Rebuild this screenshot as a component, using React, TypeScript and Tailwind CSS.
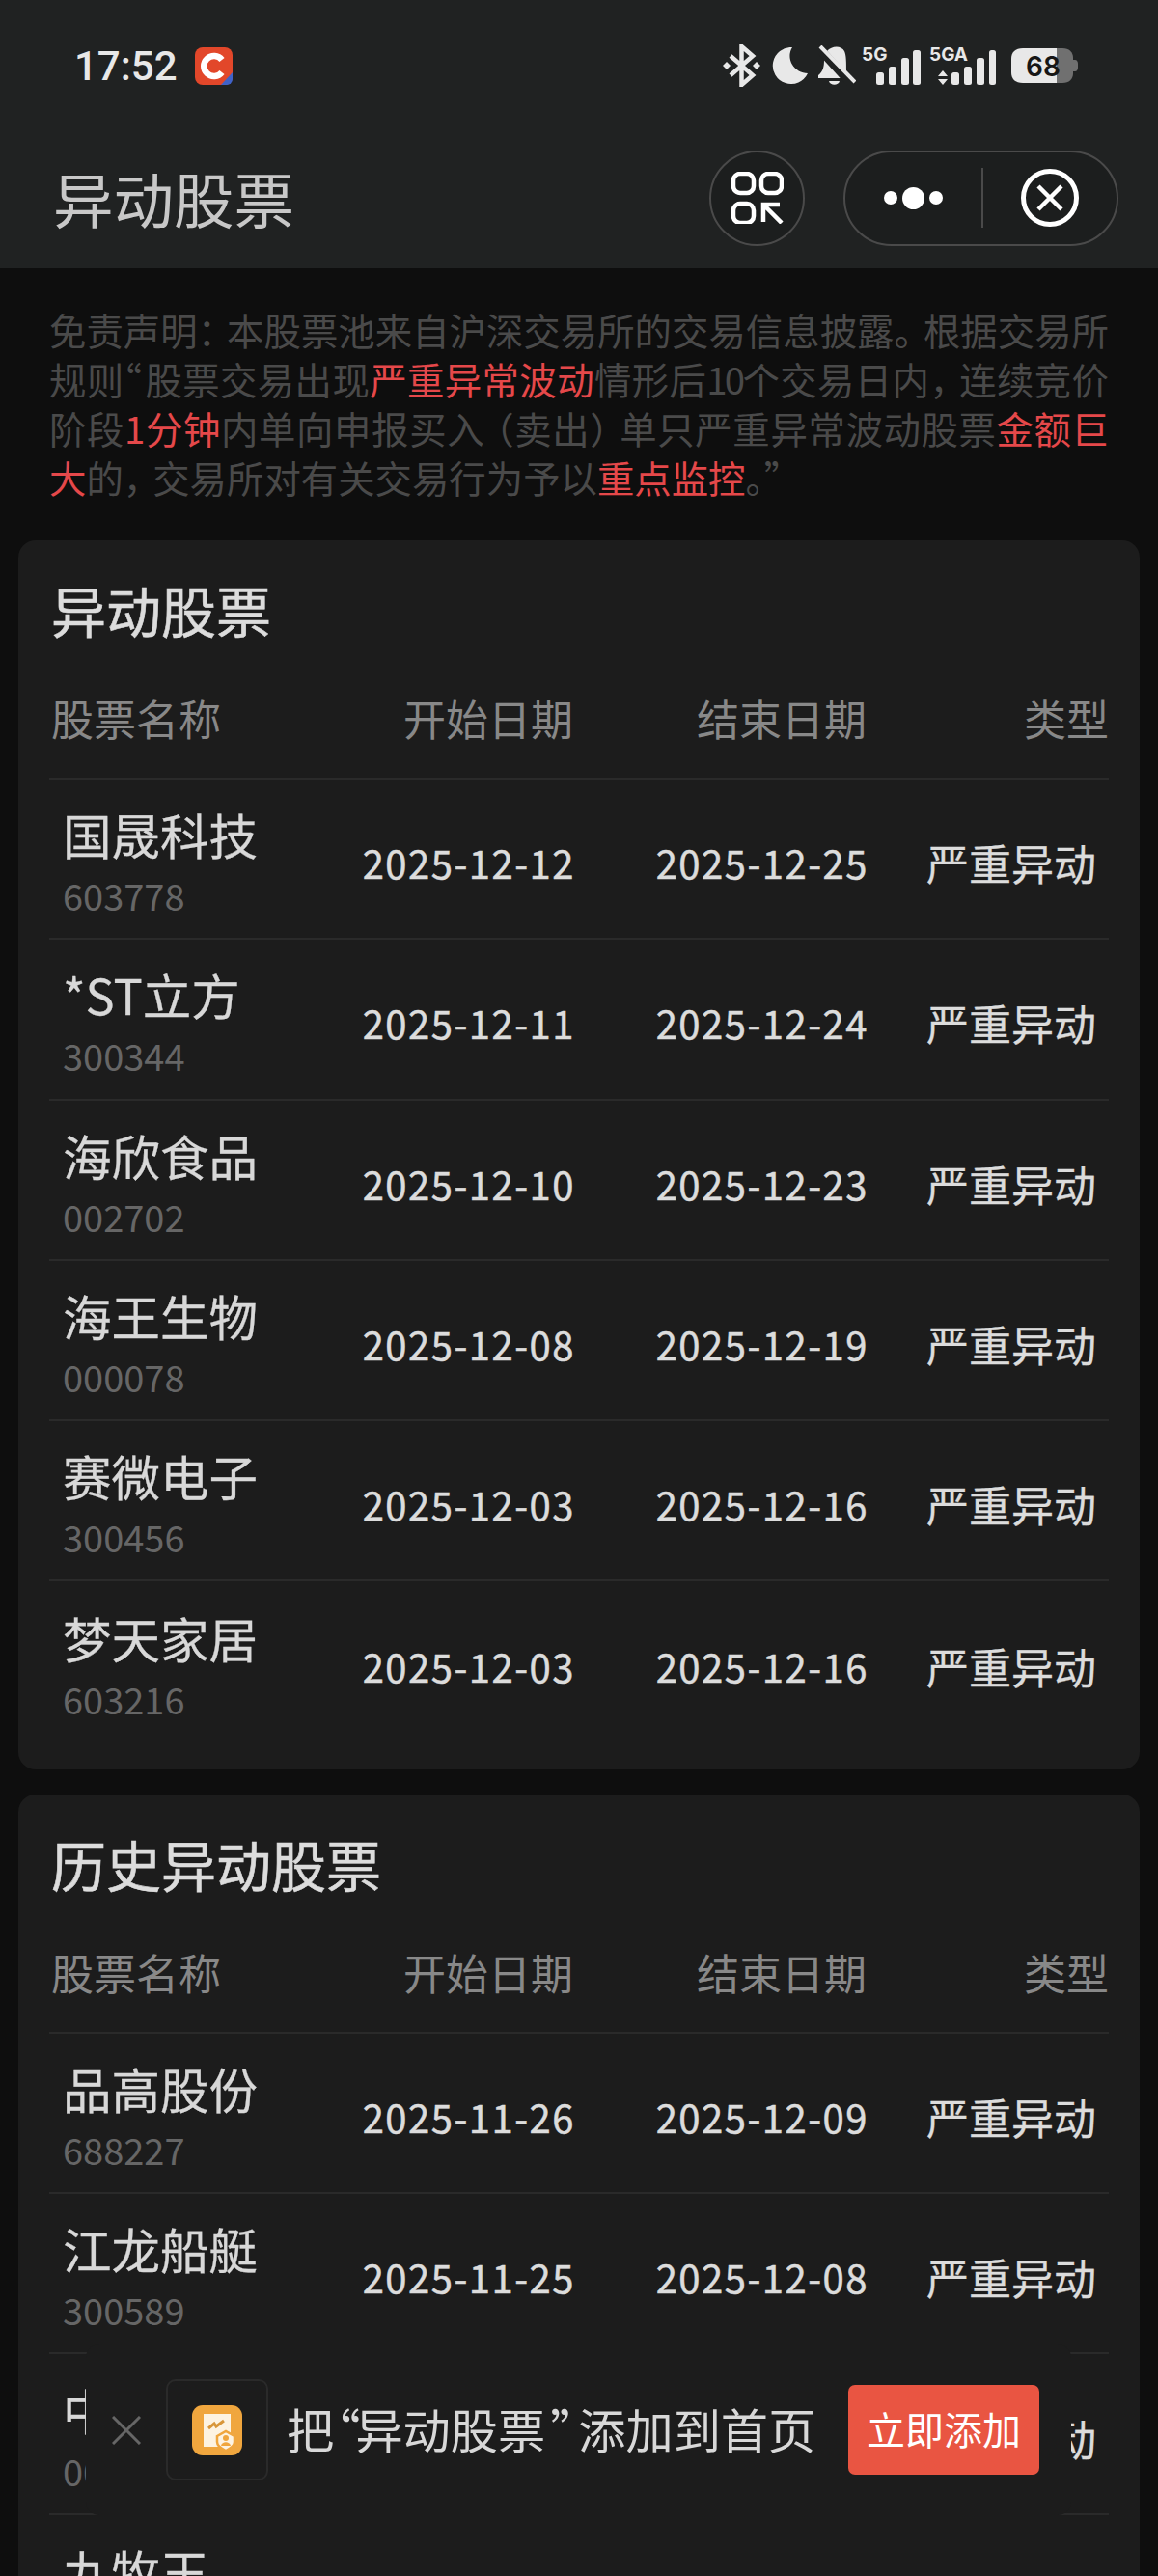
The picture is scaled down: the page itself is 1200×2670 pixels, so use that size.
type Stock = { name: string; code: string; start: string; end: string };

const CURRENT: Stock[] = [
  { name: "国晟科技", code: "603778", start: "2025-12-12", end: "2025-12-25" },
  { name: "*ST立方", code: "300344", start: "2025-12-11", end: "2025-12-24" },
  { name: "海欣食品", code: "002702", start: "2025-12-10", end: "2025-12-23" },
  { name: "海王生物", code: "000078", start: "2025-12-08", end: "2025-12-19" },
  { name: "赛微电子", code: "300456", start: "2025-12-03", end: "2025-12-16" },
  { name: "梦天家居", code: "603216", start: "2025-12-03", end: "2025-12-16" },
];

const HISTORY: Stock[] = [
  { name: "品高股份", code: "688227", start: "2025-11-26", end: "2025-12-09" },
  { name: "江龙船艇", code: "300589", start: "2025-11-25", end: "2025-12-08" },
  { name: "中国长城", code: "000066", start: "2025-11-21", end: "2025-12-04" },
  { name: "九牧王", code: "601566", start: "2025-11-20", end: "2025-12-03" },
];

const COLS = "grid grid-cols-[324px_221px_304px_249px]";

function StatusIcons() {
  return (
    <div className="flex items-center pr-[83px]">
      <svg width="39" height="44" viewBox="0 0 39 44" fill="none" stroke="#e8e8e8" strokeWidth="4.5">
        <path d="M8 12 L31 32 L19.5 42 V2 L31 12 L8 32" />
        <path d="M4 18 L8 22 L4 26 L0 22Z M35 18 L39 22 L35 26 L31 22Z" fill="#e8e8e8" stroke="none" />
      </svg>
      <svg className="ml-[11px]" width="38" height="38" viewBox="0 0 38 38" fill="#e8e8e8">
        <path d="M22 0 A19 19 0 1 0 38 27 A19 18 0 0 1 22 0Z" />
      </svg>
      <svg className="ml-[11px]" width="39" height="42" viewBox="0 0 39 42">
        <path d="M9 6 C14 0 24 0 27 6 C29 10 29 18 29 27 L31 31 L31 34 L0 34 L0 31 C5 27 6 22 6 15 C6 11 7 8 9 6Z" fill="#e8e8e8" />
        <path d="M11 37 H22 C21 42 12 42 11 37Z" fill="#e8e8e8" />
        <path d="M-2 0 L36 42" stroke="#202222" strokeWidth="9" />
        <path d="M2 1 L38 38" stroke="#e8e8e8" strokeWidth="4" />
      </svg>
      <svg className="ml-[6px]" width="61" height="41" viewBox="0 0 61 41" fill="#e8e8e8">
        <text x="0" y="15" fontFamily="Inter" fontWeight="700" fontSize="19">5G</text>
        <rect x="15" y="27" width="8" height="13" rx="2.5" />
        <rect x="28" y="21" width="8" height="19" rx="2.5" />
        <rect x="41" y="12" width="8" height="28" rx="2.5" />
        <rect x="53" y="4" width="8" height="36" rx="2.5" />
      </svg>
      <svg className="ml-[9px]" width="69" height="41" viewBox="0 0 69 41" fill="#e8e8e8">
        <text x="0" y="15" fontFamily="Inter" fontWeight="700" fontSize="19">5GA</text>
        <path d="M9 31 L14 25 L19 31Z M9 34 L19 34 L14 40Z" />
        <rect x="23" y="27" width="8" height="13" rx="2.5" />
        <rect x="36" y="21" width="8" height="19" rx="2.5" />
        <rect x="49" y="12" width="8" height="28" rx="2.5" />
        <rect x="62" y="4" width="7" height="36" rx="2.5" />
      </svg>
      <svg className="ml-[16px]" width="69" height="36" viewBox="0 0 69 36">
        <path d="M47 0 H53 C60 0 64 4 64 10 V26 C64 32 60 36 53 36 H47Z" fill="#707070" />
        <path d="M64 12 H66 C68 12 69 14 69 16 V20 C69 22 68 24 66 24 H64Z" fill="#707070" />
        <path d="M12 0 H47 V36 H12 C4 36 0 32 0 25 V11 C0 4 4 0 12 0Z" fill="#e8e8e8" />
        <text x="15" y="29" fontFamily="Inter" fontWeight="600" fontSize="28" fill="#161616">68</text>
      </svg>
    </div>
  );
}

function AppLogo() {
  return (
    <svg width="39" height="39" viewBox="0 0 39 39">
      <rect width="39" height="39" rx="8" fill="#e2472a" />
      <path d="M28 13 A10.5 10.5 0 1 0 28 26" fill="none" stroke="#fff" strokeWidth="6.5" />
      <path d="M39 26 V33 A6 6 0 0 1 33 39 H27Z" fill="#3f62c8" />
    </svg>
  );
}

function StockTable({ title, rows }: { title: string; rows: Stock[] }) {
  return (
    <section className="mx-[19px] rounded-[18px] bg-[#1c1c1c] px-[32px] pb-[28px] pt-[31px]">
      <h2 className="ml-[2px] text-[57px] leading-[80px] text-[#dcdcdc] [-webkit-text-stroke:0.6px_#dcdcdc]">{title}</h2>
      <div className={`${COLS} h-[137px] items-center border-b-2 border-[#2a2a2a] pt-[11px] text-right text-[44px] text-[#888888]`}>
        <span className="pl-[2px] text-left">股票名称</span>
        <span className="whitespace-nowrap pr-[2px]">开始日期</span>
        <span className="pr-[2px]">结束日期</span>
        <span>类型</span>
      </div>
      {rows.map((r) => (
        <div
          key={r.code}
          className={`${COLS} h-[166.3px] items-center border-b-2 border-[#2a2a2a] text-right last:border-0`}
        >
          <div className="pl-[14px] pt-[6px] text-left">
            <div className="whitespace-nowrap text-[50.5px] leading-[70px] text-[#d8d8d8] [-webkit-text-stroke:0.3px_#d8d8d8]">{r.name}</div>
            <div className="text-[38px] leading-[58px] text-[#666666]">{r.code}</div>
          </div>
          <span className="whitespace-nowrap pt-[8px] text-[40px] tracking-[1.5px] text-[#dcdcdc] [-webkit-text-stroke:0.5px_#dcdcdc]">{r.start}</span>
          <span className="whitespace-nowrap pt-[8px] text-[40px] tracking-[1.5px] text-[#dcdcdc] [-webkit-text-stroke:0.5px_#dcdcdc]">{r.end}</span>
          <span className="pr-[13px] pt-[8px] text-[44px] text-[#dcdcdc] [-webkit-text-stroke:0.3px_#dcdcdc]">严重异动</span>
        </div>
      ))}
    </section>
  );
}

function Red({ children }: { children: string }) {
  return <span className="text-[#e5484a]">{children}</span>;
}

function Punct({ children }: { children: string }) {
  return <span className="-mr-[8px]">{children}</span>;
}

function Disclaimer() {
  return (
    <div className="px-[51px] pb-[40px] pt-[38px] text-[38.4px] leading-[51px] text-[#4a4a4a]">
      <div className="whitespace-nowrap [text-align-last:justify]">
        免责声明<Punct>：</Punct>本股票池来自沪深交易所的交易信息披露<Punct>。</Punct>根据交易所
      </div>
      <div className="whitespace-nowrap [text-align-last:justify]">
        规则<span className="-ml-[20px] mr-[3px]">“</span>股票交易出现<Red>严重异常波动</Red>情形后<span className="tracking-[-3px]">10</span>个交易日内<Punct>，</Punct>连续竞价
      </div>
      <div className="whitespace-nowrap [text-align-last:justify]">
        阶段<Red>1分钟</Red>内单向申报买入<span className="-ml-[8px]">（</span>卖出<Punct>）</Punct>单只严重异常波动股票<Red>金额巨</Red>
      </div>
      <div className="whitespace-nowrap">
        <Red>大</Red>的<Punct>，</Punct>交易所对有关交易行为予以<Red>重点监控</Red>。”
      </div>
    </div>
  );
}

function AddBanner() {
  return (
    <div className="absolute left-[89px] top-[2430px] flex h-[177px] w-[1021px] items-center rounded-[14px] bg-[#1c1c1c]">
      <svg className="ml-[27px]" width="30" height="30" viewBox="0 0 30 30" stroke="#666666" strokeWidth="3">
        <path d="M1 1 L29 29 M29 1 L1 29" />
      </svg>
      <div className="ml-[26px] flex h-[105px] w-[106px] items-center justify-center rounded-[10px] border-2 border-[#2a2a2a]">
        <svg width="52" height="52" viewBox="0 0 52 52">
          <rect width="52" height="52" rx="11" fill="#f0a63e" />
          <rect x="12" y="9" width="28" height="34" fill="#fdf3e2" />
          <path d="M17 24 L23 19 L25 22 L33 16" fill="none" stroke="#d8963a" strokeWidth="3" />
          <path d="M26 32 L35 27 L44 32 V38 C44 43 39 45 35 47 C31 45 26 43 26 38Z" fill="#fdf3e2" stroke="#f0a63e" strokeWidth="2.5" />
          <circle cx="35" cy="34" r="3" fill="#f0a63e" />
          <path d="M30 42 C31 37 39 37 40 42Z" fill="#f0a63e" />
        </svg>
      </div>
      <span className="ml-[19px] whitespace-nowrap pb-[4px] text-[49.2px] text-[#d8d8d8]">
        把<span className="-ml-[22px] -mr-[5px]">“</span>异动股票<span className="ml-[5px] -mr-[20px]">”</span>添加到首页
      </span>
      <button className="ml-auto mr-[33px] flex h-[93px] w-[198px] items-center justify-center rounded-[7px] bg-[#e95542] pb-[4px] text-[40px] text-white">
        立即添加
      </button>
    </div>
  );
}

export default function App() {
  return (
    <div className="relative h-[2670px] w-[1200px] overflow-hidden bg-[#0e0e0e] font-['Noto_Sans_CJK_SC',sans-serif]">
      <header className="h-[278px] bg-[#202222]">
        <div className="flex h-[136px] items-center justify-between">
          <div className="flex items-center pl-[77px]">
            <span className="font-['Roboto',sans-serif] text-[42px] font-medium text-[#e8e8e8]">17:52</span>
            <span className="ml-[18px] flex">
              <AppLogo />
            </span>
          </div>
          <StatusIcons />
        </div>
        <div className="flex h-[142px] items-center pb-[4px] pl-[55px]">
          <h1 className="text-[62.5px] text-[#c8c8c8]">异动股票</h1>
          <div className="ml-auto flex h-[99px] w-[99px] items-center justify-center rounded-full border-2 border-[#4a4a4a] bg-[#1c1e1e]">
            <svg width="54" height="54" viewBox="0 0 54 54" fill="none" stroke="#fff" strokeWidth="4.5">
              <rect x="2" y="2" width="21" height="20" rx="7" />
              <rect x="31" y="2" width="21" height="20" rx="7" />
              <rect x="2" y="33" width="21" height="20" rx="7" />
              <path d="M50 34 H33 V52 M33 34 L52 53" />
            </svg>
          </div>
          <div className="ml-[40px] mr-[41px] flex h-[99px] w-[285px] items-center rounded-full border-2 border-[#4a4a4a] bg-[#1c1e1e]">
            <div className="flex w-[141px] items-center justify-center gap-[5px]">
              <span className="h-[14px] w-[14px] rounded-full bg-white" />
              <span className="h-[23px] w-[23px] rounded-full bg-white" />
              <span className="h-[14px] w-[14px] rounded-full bg-white" />
            </div>
            <div className="h-[62px] w-[2px] bg-[#4a4a4a]" />
            <div className="flex flex-1 items-center justify-center">
              <svg width="60" height="60" viewBox="0 0 60 60" fill="none" stroke="#fff">
                <circle cx="30" cy="30" r="27.5" strokeWidth="5" />
                <path d="M18 18 L42 42 M42 18 L18 42" strokeWidth="4.5" />
              </svg>
            </div>
          </div>
        </div>
      </header>
      <Disclaimer />
      <StockTable title="异动股票" rows={CURRENT} />
      <div className="h-[26px]" />
      <StockTable title="历史异动股票" rows={HISTORY} />
      <AddBanner />
    </div>
  );
}
